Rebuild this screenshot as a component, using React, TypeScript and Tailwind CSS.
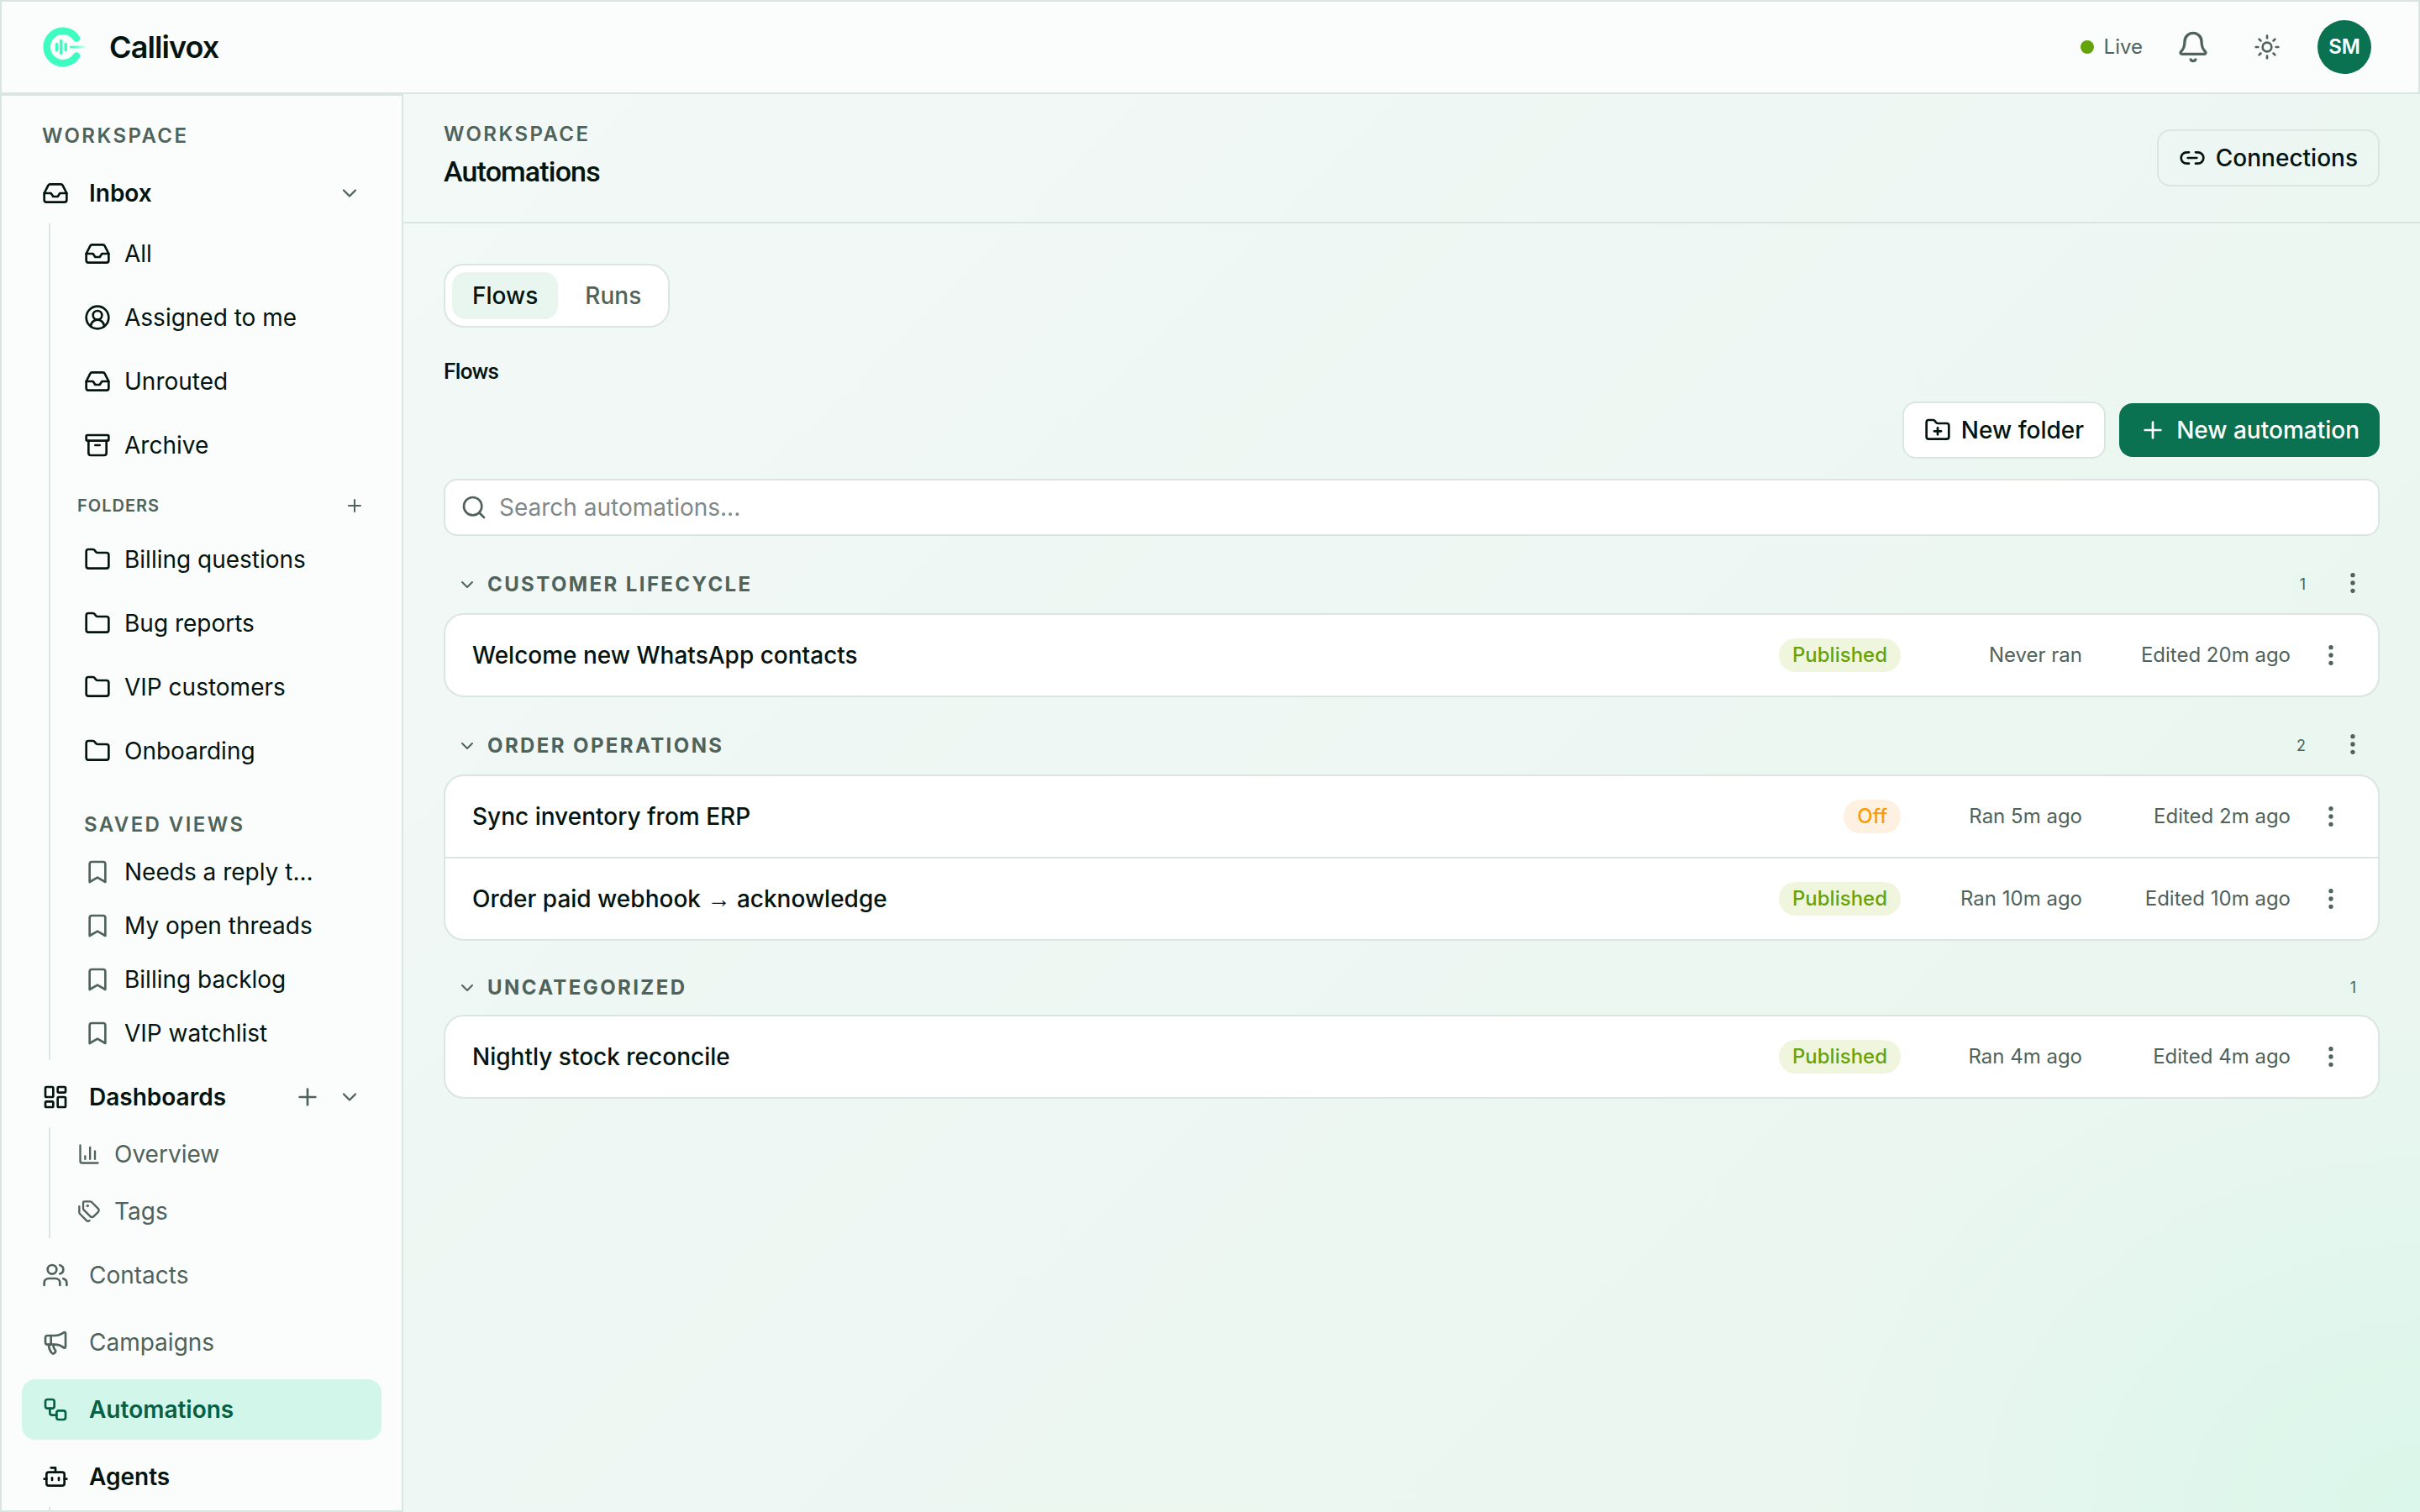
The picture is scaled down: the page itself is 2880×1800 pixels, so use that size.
import React from "react";
import {
  Inbox,
  CircleUserRound,
  Archive,
  Folder,
  FolderPlus,
  Bookmark,
  LayoutDashboard,
  ChartColumn,
  Tags,
  Users,
  Megaphone,
  Workflow,
  Bot,
  Plus,
  ChevronDown,
  Bell,
  Sun,
  Link2,
  Search,
  EllipsisVertical,
  type LucideIcon,
} from "lucide-react";

type Flow = { name: React.ReactNode; status: "Published" | "Off"; ran: string; edited: string };
type Section = { title: string; count: number; menu: boolean; flows: Flow[] };

const sections: Section[] = [
  {
    title: "Customer lifecycle",
    count: 1,
    menu: true,
    flows: [{ name: "Welcome new WhatsApp contacts", status: "Published", ran: "Never ran", edited: "Edited 20m ago" }],
  },
  {
    title: "Order operations",
    count: 2,
    menu: true,
    flows: [
      { name: "Sync inventory from ERP", status: "Off", ran: "Ran 5m ago", edited: "Edited 2m ago" },
      {
        name: (
          <>
            Order paid webhook <span className="font-['Liberation_Sans',sans-serif]">→</span> acknowledge
          </>
        ),
        status: "Published",
        ran: "Ran 10m ago",
        edited: "Edited 10m ago",
      },
    ],
  },
  {
    title: "Uncategorized",
    count: 1,
    menu: false,
    flows: [{ name: "Nightly stock reconcile", status: "Published", ran: "Ran 4m ago", edited: "Edited 4m ago" }],
  },
];

const inboxItems: [LucideIcon, string][] = [
  [Inbox, "All"],
  [CircleUserRound, "Assigned to me"],
  [Inbox, "Unrouted"],
  [Archive, "Archive"],
];
const folders = ["Billing questions", "Bug reports", "VIP customers", "Onboarding"];
const savedViews = ["Needs a reply t...", "My open threads", "Billing backlog", "VIP watchlist"];

function Logo() {
  return (
    <svg viewBox="0 0 56 56" className="size-14 shrink-0" fill="none" aria-hidden="true">
      <defs>
        <linearGradient id="tail" x1="32" y1="0" x2="54" y2="0" gradientUnits="userSpaceOnUse">
          <stop offset="0" stopColor="#3dfdc0" />
          <stop offset="0.4" stopColor="#3dfdc0" stopOpacity="0.8" />
          <stop offset="1" stopColor="#3dfdc0" stopOpacity="0" />
        </linearGradient>
      </defs>
      <path d="M41 17.5A19.2 19.2 0 1 0 41 38.5" stroke="#3dfdc0" strokeWidth="8.6" strokeLinecap="round" />
      <path d="M17.5 24.5v7M28.2 24.5v7" stroke="#3dfdc0" strokeWidth="3.6" strokeLinecap="round" />
      <path d="M22.7 20.5v15" stroke="#3dfdc0" strokeWidth="3.6" strokeLinecap="round" />
      <rect x="33" y="26.6" width="21" height="3" rx="1.5" fill="url(#tail)" />
    </svg>
  );
}

function NavItem({
  icon: Icon,
  label,
  tone = "muted",
  children,
}: {
  icon: LucideIcon;
  label: string;
  tone?: "muted" | "strong" | "active";
  children?: React.ReactNode;
}) {
  const tones = {
    muted: "text-[#4f635b]",
    strong: "font-semibold text-[#04140e]",
    active: "bg-[#d2f6ea] font-semibold text-[#056045]",
  };
  return (
    <div className={`flex h-18 shrink-0 items-center rounded-2xl pr-5 pl-6 ${tones[tone]}`}>
      <a href="#" className="flex flex-1 items-center gap-6">
        <Icon className="size-8" aria-hidden="true" />
        {label}
      </a>
      {children}
    </div>
  );
}

function IconButton({ icon: Icon, label, box, size }: { icon: LucideIcon; label: string; box: string; size: string }) {
  return (
    <button type="button" aria-label={label} className={`flex shrink-0 items-center justify-center text-[#4f635b] ${box}`}>
      <Icon className={size} aria-hidden="true" />
    </button>
  );
}

function Sidebar() {
  return (
    <aside className="w-120 shrink-0 overflow-hidden border-2 border-[#d9e6e1] bg-[#fbfdfc]">
      <nav className="flex flex-col gap-2 px-6 pt-8">
        <h2 className="mb-2 pl-6 text-2xl leading-8 font-semibold tracking-widest text-[#4f635b]">WORKSPACE</h2>
        <div>
          <NavItem icon={Inbox} label="Inbox" tone="strong">
            <IconButton icon={ChevronDown} label="Collapse inbox" box="size-9" size="size-7" />
          </NavItem>
          <div className="ml-8 border-l-2 border-[#d9e6e1] text-[#04140e]">
            <ul className="flex flex-col gap-1 pl-10">
              {inboxItems.map(([Icon, label]) => (
                <li key={label}>
                  <a href="#" className="flex h-18 items-center gap-4">
                    <Icon className="size-8" aria-hidden="true" />
                    {label}
                  </a>
                </li>
              ))}
            </ul>
            <div className="mt-2 flex h-14 items-center justify-between pr-5 pl-8">
              <h3 className="text-xl font-semibold tracking-wider text-[#4f635b]">FOLDERS</h3>
              <IconButton icon={Plus} label="New folder" box="size-6" size="size-6" />
            </div>
            <ul className="flex flex-col gap-1 pl-10">
              {folders.map((label) => (
                <li key={label}>
                  <a href="#" className="flex h-18 items-center gap-4">
                    <Folder className="size-8" aria-hidden="true" />
                    {label}
                  </a>
                </li>
              ))}
            </ul>
            <h3 className="mt-9 mb-2 pl-10 text-2xl leading-8 font-semibold tracking-widest text-[#4f635b]">
              SAVED VIEWS
            </h3>
            <ul className="pl-10">
              {savedViews.map((label) => (
                <li key={label}>
                  <a href="#" className="flex h-16 items-center gap-4">
                    <Bookmark className="size-8 text-[#4f635b]" aria-hidden="true" />
                    {label}
                  </a>
                </li>
              ))}
            </ul>
          </div>
        </div>
        <div>
          <NavItem icon={LayoutDashboard} label="Dashboards" tone="strong">
            <IconButton icon={Plus} label="New dashboard" box="mr-3 size-10" size="size-8" />
            <IconButton icon={ChevronDown} label="Collapse dashboards" box="size-9" size="size-7" />
          </NavItem>
          <ul className="ml-8 flex flex-col gap-1 border-l-2 border-[#d9e6e1] pl-8 text-[#4f635b]">
            <li>
              <a href="#" className="flex h-16 items-center gap-4">
                <ChartColumn className="size-7" aria-hidden="true" />
                Overview
              </a>
            </li>
            <li>
              <a href="#" className="flex h-16 items-center gap-4">
                <Tags className="size-7" aria-hidden="true" />
                Tags
              </a>
            </li>
          </ul>
        </div>
        <NavItem icon={Users} label="Contacts" />
        <NavItem icon={Megaphone} label="Campaigns" />
        <NavItem icon={Workflow} label="Automations" tone="active" />
        <div>
          <NavItem icon={Bot} label="Agents" tone="strong" />
          <div className="ml-8 h-16 border-l-2 border-[#d9e6e1]" />
        </div>
      </nav>
    </aside>
  );
}

function FlowSection({ section }: { section: Section }) {
  return (
    <section className="mt-8">
      <div className="flex items-center pr-2">
        <button type="button" className="flex h-11 items-center gap-3 pt-1 pl-4 text-[#4f635b]">
          <ChevronDown className="size-6" aria-hidden="true" />
          <span className="text-2xl font-bold tracking-widest uppercase">{section.title}</span>
        </button>
        <span
          className={`mt-1 ml-auto rounded-full bg-[#e8f7f0] px-2 text-lg leading-6 text-[#4f635b] ${section.menu ? "mr-6" : "mr-3"}`}
        >
          {section.count}
        </span>
        {section.menu && (
          <IconButton icon={EllipsisVertical} label={`${section.title} options`} box="size-12" size="size-8" />
        )}
      </div>
      <ul className="mt-3 divide-y-2 divide-[#d9e6e1] overflow-hidden rounded-3xl border-2 border-[#d9e6e1] bg-white">
        {section.flows.map((flow) => (
          <li key={flow.edited}>
            <div className="flex h-24 items-center pr-6 pl-8">
              <a href="#" className="flex-1 truncate font-medium text-[#04140e]">
                {flow.name}
              </a>
              <span
                className={`rounded-full px-4 text-2xl leading-10 font-medium ${
                  flow.status === "Off" ? "bg-[#fff1e2] text-[#f99d07]" : "bg-[#f0f6dd] text-[#65a30d]"
                }`}
              >
                {flow.status}
              </span>
              <span className="ml-6 w-48 text-right text-2xl text-[#4f635b]">{flow.ran}</span>
              <span className="ml-6 w-56 text-right text-2xl text-[#4f635b]">{flow.edited}</span>
              <div className="ml-4">
                <IconButton icon={EllipsisVertical} label="Automation options" box="size-16" size="size-8" />
              </div>
            </div>
          </li>
        ))}
      </ul>
    </section>
  );
}

export default function App() {
  return (
    <div className="flex h-screen flex-col overflow-hidden bg-[radial-gradient(26%_34%_at_100%_100%,#dbf6ea_0%,#dbf6ea00_100%),linear-gradient(135deg,#f4f9f8_0%,#edf6f2_60%,#eaf6f0_100%)] font-[Inter,sans-serif] text-[28px] leading-10 text-[#04140e] [font-optical-sizing:none]">
      <header className="flex h-28 shrink-0 items-center border-2 border-[#d9e6e1] bg-[#fbfdfc] px-12">
        <a href="#" className="flex items-center gap-6 text-4xl font-semibold tracking-tight">
          <Logo />
          Callivox
        </a>
        <div className="ml-auto flex items-center">
          <div className="mr-6 flex items-center gap-3 text-2xl text-[#4f635b]">
            <span className="size-4 rounded-full bg-[#65a30d]" />
            Live
          </div>
          <IconButton icon={Bell} label="Notifications" box="size-18" size="size-10" />
          <div className="mx-4">
            <IconButton icon={Sun} label="Toggle theme" box="size-18" size="size-8" />
          </div>
          <button
            type="button"
            className="mx-2 size-16 rounded-full bg-[#0a7250] text-center text-2xl font-semibold text-white"
          >
            SM
          </button>
        </div>
      </header>
      <div className="flex min-h-0 flex-1">
        <Sidebar />
        <main className="min-w-0 flex-1">
          <div className="flex items-center justify-between border-b-2 border-[#d9e6e1] px-12 py-8">
            <div>
              <p className="text-2xl leading-8 font-semibold tracking-widest text-[#4f635b]">WORKSPACE</p>
              <h1 className="font-[Roboto,sans-serif] text-[34px] leading-14 font-medium tracking-tight">Automations</h1>
            </div>
            <button
              type="button"
              className="flex h-17 items-center gap-3 rounded-2xl border-2 border-[#d9e6e1] px-6 font-medium"
            >
              <Link2 className="size-8" aria-hidden="true" />
              Connections
            </button>
          </div>
          <div className="px-12 pt-12">
            <div role="tablist" className="inline-flex gap-2 rounded-3xl border-2 border-[#d9e6e1] bg-white p-2 align-top font-medium">
              <button type="button" role="tab" aria-selected="true" className="h-14 rounded-2xl bg-[#e9f6f0] px-6">
                Flows
              </button>
              <button type="button" role="tab" aria-selected="false" className="h-14 rounded-2xl px-6 text-[#4f635b]">
                Runs
              </button>
            </div>
            <h2 className="mt-8 font-[Roboto,sans-serif] text-[26px] leading-10 font-medium tracking-tight">Flows</h2>
            <div className="mt-4 flex items-center justify-end gap-4 font-medium">
              <button type="button" className="flex h-17 items-center gap-3 rounded-2xl border-2 border-[#d9e6e1] bg-white px-6">
                <FolderPlus className="size-8" aria-hidden="true" />
                New folder
              </button>
              <button type="button" className="flex h-16 items-center gap-3 rounded-2xl bg-[#0a7250] px-6 text-white">
                <Plus className="size-8" aria-hidden="true" />
                New automation
              </button>
            </div>
            <label className="mt-6 flex h-17 items-center gap-3.5 rounded-2xl border-2 border-[#d9e6e1] bg-white px-4.5">
              <Search className="size-8 text-[#4f635b]" aria-hidden="true" />
              <input
                type="search"
                aria-label="Search automations"
                placeholder="Search automations..."
                className="flex-1 bg-transparent outline-none placeholder:text-[#818987]"
              />
            </label>
            {sections.map((section) => (
              <FlowSection key={section.title} section={section} />
            ))}
          </div>
        </main>
      </div>
    </div>
  );
}
